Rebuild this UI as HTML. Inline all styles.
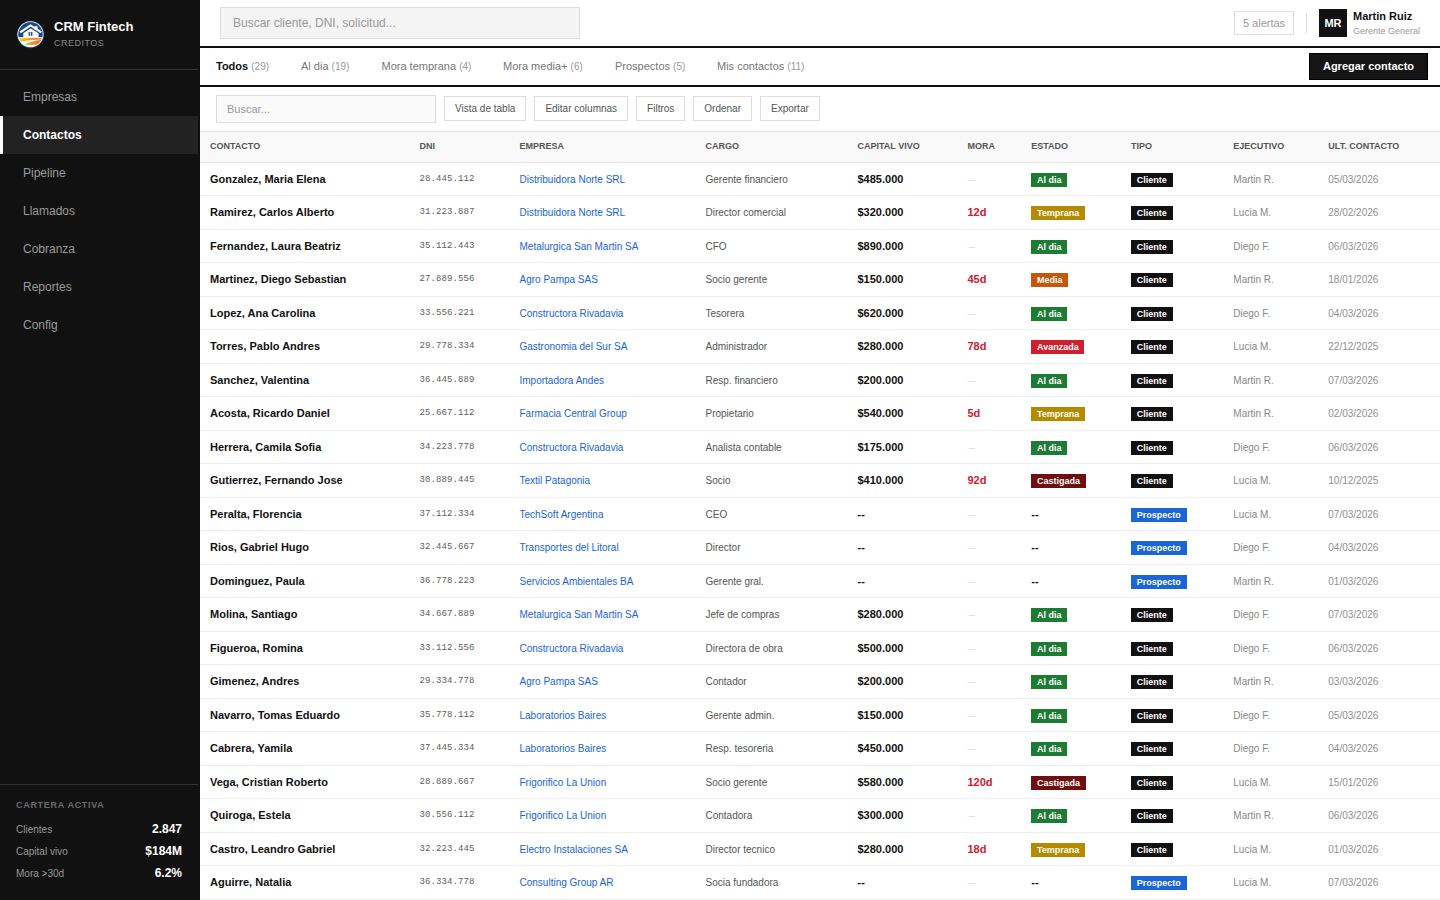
<!DOCTYPE html>
<html lang="es">
<head>
<meta charset="utf-8">
<title>CRM Fintech - Contactos</title>
<style>
*{box-sizing:border-box;margin:0;padding:0}
html,body{width:1440px;height:900px;overflow:hidden;background:#fff}
body{font-family:"Liberation Sans",sans-serif;color:#111;position:relative}
.side{position:absolute;left:0;top:0;width:200px;height:900px;background:#111}
.brand{position:absolute;left:0;top:0;width:198px;height:70px;border-bottom:1px solid #333}
.logo{position:absolute;left:16px;top:20px;width:29px;height:29px}
.bt1{position:absolute;left:54px;top:19px;font-size:13px;font-weight:bold;color:#fff;white-space:nowrap}
.bt2{position:absolute;left:54px;top:38px;font-size:9px;letter-spacing:.5px;color:#888;white-space:nowrap}
.nav{position:absolute;left:0;top:78px;width:198px}
.nav a{display:block;height:38px;line-height:38px;padding-left:23px;font-size:12px;color:#999;text-decoration:none;white-space:nowrap}
.nav a.on{background:#222;color:#fff;font-weight:bold;border-left:3px solid #fff;padding-left:20px}
.port{position:absolute;left:0;top:784px;width:198px;height:116px;border-top:1px solid #333}
.pt{position:absolute;left:16px;top:15px;font-size:9px;font-weight:bold;letter-spacing:.7px;color:#6a6a6a;white-space:nowrap}
.pr{position:absolute;left:16px;right:16px;height:22px;font-size:10px;color:#999}
.pr span{position:absolute;left:0;top:0}
.pr b{position:absolute;right:0;top:-2px;font-size:12px;color:#fff}

.main{position:absolute;left:200px;top:0;width:1240px;height:900px}
.hdr{position:absolute;left:0;top:0;width:1240px;height:48px;border-bottom:2px solid #111}
.gsearch{position:absolute;left:20px;top:7px;width:360px;height:32px;background:#f4f4f4;border:1px solid #ddd;font-size:12px;color:#999;padding-left:12px;line-height:30px}
.alerts{position:absolute;left:1034px;top:11px;width:60px;height:24px;border:1px solid #ddd;font-size:11px;color:#999;line-height:22px;text-align:center}
.vdiv{position:absolute;left:1106px;top:13px;width:1px;height:20px;background:#ddd}
.avatar{position:absolute;left:1119px;top:9px;width:28px;height:28px;background:#111;color:#fff;font-size:11px;font-weight:bold;text-align:center;line-height:28px}
.uname{position:absolute;left:1153px;top:10px;font-size:11px;font-weight:bold;color:#111;white-space:nowrap}
.urole{position:absolute;left:1153px;top:26px;font-size:9px;color:#999;white-space:nowrap}

.tabs{position:absolute;left:0;top:48px;width:1240px;height:39px;border-bottom:2px solid #111}
.tab{position:absolute;top:0;height:37px;line-height:36px;font-size:11px;color:#777;white-space:nowrap}
.tab small{font-size:10px;color:#999}
.tab.on{color:#111;font-weight:bold}
.tab.on small{font-weight:normal}
.addbtn{position:absolute;left:1109px;top:5px;width:119px;height:27px;background:#151515;border:1px solid #000;color:#fff;font-size:11px;font-weight:bold;line-height:25px;text-align:center}

.tool{position:absolute;left:0;top:87px;width:1240px;height:45px;border-bottom:1px solid #e5e5e5}
.lsearch{position:absolute;left:16px;top:8px;width:220px;height:28px;border:1px solid #ddd;background:#fafafa;font-size:11px;color:#999;padding-left:10px;line-height:26px}
.btn{position:absolute;top:9px;height:25px;border:1px solid #ddd;background:#fff;font-size:10px;color:#555;line-height:23px;padding:0 10px;white-space:nowrap}

.thead{position:absolute;left:0;top:132px;width:1240px;height:31px;background:#f9f9f9;border-bottom:1px solid #e5e5e5;display:flex}
.th{height:30px;line-height:28px;padding-left:10px;font-size:9px;font-weight:bold;color:#555;white-space:nowrap}
.tbody{position:absolute;left:0;top:162.75px;width:1240px}
.tr{display:flex;height:33.5px;border-bottom:1px solid #eee}
.td{padding-left:10px;white-space:nowrap;overflow:hidden;display:flex;align-items:center;height:32.5px}
.tr:nth-child(even) .td>*{position:relative;top:-0.5px}
.tr:nth-child(even) .td>.badge{top:0.5px}
.c1{width:209.5px}.c2{width:100px}.c3{width:186px}.c4{width:152px}.c5{width:110px}.c6{width:63.75px}.c7{width:99.75px}.c8{width:102.3px}.c9{width:95px}.c10{width:121.7px}
.nm{font-size:11px;font-weight:bold;color:#111}
.dni{font-family:"Liberation Mono",monospace;font-size:9px;letter-spacing:.1px;color:#606060}
.emp{font-size:10px;color:#1864dc}
.car{font-size:10px;color:#555}
.cap{font-size:11px;font-weight:bold;color:#111}
.mora{font-size:11px;font-weight:bold;color:#d0202e}
.nomora{font-size:7.5px;color:#ccc}
.badge{display:block;font-size:9px;font-weight:bold;color:#fff;padding:2px 5.75px;line-height:10px;position:relative;top:1px}
.b-ok{background:#1e7b34}
.b-tem{background:#b38a00}
.b-med{background:#c8560a}
.b-ava{background:#d0202e}
.b-cas{background:#6e0e0e}
.b-cli{background:#111}
.b-pro{background:#1a66d9}
.eje{font-size:10px;color:#888}
.fec{font-size:10px;color:#909090}
</style>
</head>
<body>
<div class="side">
  <div class="brand">
    <svg class="logo" width="29" height="29" viewBox="0 0 29 29">
      <defs>
        <linearGradient id="og" x1="0" y1="0" x2="1" y2="0"><stop offset="0" stop-color="#fbc400"/><stop offset="1" stop-color="#ef6530"/></linearGradient>
        <clipPath id="lc"><circle cx="14.5" cy="14.3" r="12.2"/></clipPath>
      </defs>
      <circle cx="14.5" cy="14.6" r="13.6" fill="#1b4a88"/>
      <circle cx="14.5" cy="14.2" r="13" fill="#f4f6f8"/>
      <g clip-path="url(#lc)">
        <rect x="0" y="0" width="29" height="17.4" fill="#1b4a88"/>
        <rect x="0" y="17.4" width="29" height="12" fill="#fff"/>
        <path d="M3 18.6 Q14 17.6 26 18.2 Q25.8 19.2 25.5 19.4 Q15 19.6 5 21.4 Q3.8 20 3 18.6Z" fill="url(#og)"/>
        <path d="M8.2 24.4 Q16 20.6 25.6 19.9 Q24.6 22.8 22 24.6 Q15 25.6 8.2 24.4Z" fill="url(#og)"/>
        <path d="M4.2 12.4 L14.5 5.4 L25.2 12.4" stroke="#fff" stroke-width="2.1" fill="none"/>
        <rect x="18.5" y="6.2" width="3" height="3.6" fill="#fff"/>
        <path d="M7.3 13.2 L14.5 8.6 L22.6 13.2 L22.6 17.6 L7.3 17.6Z" fill="#fff"/>
        <rect x="12.6" y="11.9" width="1.3" height="3.9" fill="#1b4a88"/>
        <rect x="14.8" y="11.9" width="1.6" height="3.9" fill="#1b4a88"/>
      </g>
    </svg>
    <div class="bt1">CRM Fintech</div>
    <div class="bt2">CREDITOS</div>
  </div>
  <div class="nav">
    <a>Empresas</a>
    <a class="on">Contactos</a>
    <a>Pipeline</a>
    <a>Llamados</a>
    <a>Cobranza</a>
    <a>Reportes</a>
    <a>Config</a>
  </div>
  <div class="port">
    <div class="pt">CARTERA ACTIVA</div>
    <div class="pr" style="top:39px"><span>Clientes</span><b>2.847</b></div>
    <div class="pr" style="top:61px"><span>Capital vivo</span><b>$184M</b></div>
    <div class="pr" style="top:83px"><span>Mora &gt;30d</span><b>6.2%</b></div>
  </div>
</div>
<div class="main">
  <div class="hdr">
    <div class="gsearch">Buscar cliente, DNI, solicitud...</div>
    <div class="alerts">5 alertas</div>
    <div class="vdiv"></div>
    <div class="avatar">MR</div>
    <div class="uname">Martin Ruiz</div>
    <div class="urole">Gerente General</div>
  </div>
  <div class="tabs">
    <div class="tab on" style="left:16px">Todos <small>(29)</small></div>
    <div class="tab" style="left:101px">Al dia <small>(19)</small></div>
    <div class="tab" style="left:181.5px">Mora temprana <small>(4)</small></div>
    <div class="tab" style="left:303px">Mora media+ <small>(6)</small></div>
    <div class="tab" style="left:415px">Prospectos <small>(5)</small></div>
    <div class="tab" style="left:517px">Mis contactos <small>(11)</small></div>
    <div class="addbtn">Agregar contacto</div>
  </div>
  <div class="tool">
    <div class="lsearch">Buscar...</div>
    <div class="btn" style="left:244px">Vista de tabla</div>
    <div class="btn" style="left:334.4px">Editar columnas</div>
    <div class="btn" style="left:436.1px">Filtros</div>
    <div class="btn" style="left:493.3px">Ordenar</div>
    <div class="btn" style="left:560px">Exportar</div>
  </div>
  <div class="thead">
    <div class="th c1">CONTACTO</div><div class="th c2">DNI</div><div class="th c3">EMPRESA</div><div class="th c4">CARGO</div><div class="th c5">CAPITAL VIVO</div><div class="th c6">MORA</div><div class="th c7">ESTADO</div><div class="th c8">TIPO</div><div class="th c9">EJECUTIVO</div><div class="th c10">ULT. CONTACTO</div>
  </div>
  <div class="tbody">
<div class="tr"><div class="td c1"><span class="nm">Gonzalez, Maria Elena</span></div><div class="td c2"><span class="dni">28.445.112</span></div><div class="td c3"><span class="emp">Distribuidora Norte SRL</span></div><div class="td c4"><span class="car">Gerente financiero</span></div><div class="td c5"><span class="cap">$485.000</span></div><div class="td c6"><span class="nomora">—</span></div><div class="td c7"><span class="badge b-ok">Al dia</span></div><div class="td c8"><span class="badge b-cli">Cliente</span></div><div class="td c9"><span class="eje">Martin R.</span></div><div class="td c10"><span class="fec">05/03/2026</span></div></div>
<div class="tr"><div class="td c1"><span class="nm">Ramirez, Carlos Alberto</span></div><div class="td c2"><span class="dni">31.223.887</span></div><div class="td c3"><span class="emp">Distribuidora Norte SRL</span></div><div class="td c4"><span class="car">Director comercial</span></div><div class="td c5"><span class="cap">$320.000</span></div><div class="td c6"><span class="mora">12d</span></div><div class="td c7"><span class="badge b-tem">Temprana</span></div><div class="td c8"><span class="badge b-cli">Cliente</span></div><div class="td c9"><span class="eje">Lucia M.</span></div><div class="td c10"><span class="fec">28/02/2026</span></div></div>
<div class="tr"><div class="td c1"><span class="nm">Fernandez, Laura Beatriz</span></div><div class="td c2"><span class="dni">35.112.443</span></div><div class="td c3"><span class="emp">Metalurgica San Martin SA</span></div><div class="td c4"><span class="car">CFO</span></div><div class="td c5"><span class="cap">$890.000</span></div><div class="td c6"><span class="nomora">—</span></div><div class="td c7"><span class="badge b-ok">Al dia</span></div><div class="td c8"><span class="badge b-cli">Cliente</span></div><div class="td c9"><span class="eje">Diego F.</span></div><div class="td c10"><span class="fec">06/03/2026</span></div></div>
<div class="tr"><div class="td c1"><span class="nm">Martinez, Diego Sebastian</span></div><div class="td c2"><span class="dni">27.889.556</span></div><div class="td c3"><span class="emp">Agro Pampa SAS</span></div><div class="td c4"><span class="car">Socio gerente</span></div><div class="td c5"><span class="cap">$150.000</span></div><div class="td c6"><span class="mora">45d</span></div><div class="td c7"><span class="badge b-med">Media</span></div><div class="td c8"><span class="badge b-cli">Cliente</span></div><div class="td c9"><span class="eje">Martin R.</span></div><div class="td c10"><span class="fec">18/01/2026</span></div></div>
<div class="tr"><div class="td c1"><span class="nm">Lopez, Ana Carolina</span></div><div class="td c2"><span class="dni">33.556.221</span></div><div class="td c3"><span class="emp">Constructora Rivadavia</span></div><div class="td c4"><span class="car">Tesorera</span></div><div class="td c5"><span class="cap">$620.000</span></div><div class="td c6"><span class="nomora">—</span></div><div class="td c7"><span class="badge b-ok">Al dia</span></div><div class="td c8"><span class="badge b-cli">Cliente</span></div><div class="td c9"><span class="eje">Diego F.</span></div><div class="td c10"><span class="fec">04/03/2026</span></div></div>
<div class="tr"><div class="td c1"><span class="nm">Torres, Pablo Andres</span></div><div class="td c2"><span class="dni">29.778.334</span></div><div class="td c3"><span class="emp">Gastronomia del Sur SA</span></div><div class="td c4"><span class="car">Administrador</span></div><div class="td c5"><span class="cap">$280.000</span></div><div class="td c6"><span class="mora">78d</span></div><div class="td c7"><span class="badge b-ava">Avanzada</span></div><div class="td c8"><span class="badge b-cli">Cliente</span></div><div class="td c9"><span class="eje">Lucia M.</span></div><div class="td c10"><span class="fec">22/12/2025</span></div></div>
<div class="tr"><div class="td c1"><span class="nm">Sanchez, Valentina</span></div><div class="td c2"><span class="dni">36.445.889</span></div><div class="td c3"><span class="emp">Importadora Andes</span></div><div class="td c4"><span class="car">Resp. financiero</span></div><div class="td c5"><span class="cap">$200.000</span></div><div class="td c6"><span class="nomora">—</span></div><div class="td c7"><span class="badge b-ok">Al dia</span></div><div class="td c8"><span class="badge b-cli">Cliente</span></div><div class="td c9"><span class="eje">Martin R.</span></div><div class="td c10"><span class="fec">07/03/2026</span></div></div>
<div class="tr"><div class="td c1"><span class="nm">Acosta, Ricardo Daniel</span></div><div class="td c2"><span class="dni">25.667.112</span></div><div class="td c3"><span class="emp">Farmacia Central Group</span></div><div class="td c4"><span class="car">Propietario</span></div><div class="td c5"><span class="cap">$540.000</span></div><div class="td c6"><span class="mora">5d</span></div><div class="td c7"><span class="badge b-tem">Temprana</span></div><div class="td c8"><span class="badge b-cli">Cliente</span></div><div class="td c9"><span class="eje">Martin R.</span></div><div class="td c10"><span class="fec">02/03/2026</span></div></div>
<div class="tr"><div class="td c1"><span class="nm">Herrera, Camila Sofia</span></div><div class="td c2"><span class="dni">34.223.778</span></div><div class="td c3"><span class="emp">Constructora Rivadavia</span></div><div class="td c4"><span class="car">Analista contable</span></div><div class="td c5"><span class="cap">$175.000</span></div><div class="td c6"><span class="nomora">—</span></div><div class="td c7"><span class="badge b-ok">Al dia</span></div><div class="td c8"><span class="badge b-cli">Cliente</span></div><div class="td c9"><span class="eje">Diego F.</span></div><div class="td c10"><span class="fec">06/03/2026</span></div></div>
<div class="tr"><div class="td c1"><span class="nm">Gutierrez, Fernando Jose</span></div><div class="td c2"><span class="dni">30.889.445</span></div><div class="td c3"><span class="emp">Textil Patagonia</span></div><div class="td c4"><span class="car">Socio</span></div><div class="td c5"><span class="cap">$410.000</span></div><div class="td c6"><span class="mora">92d</span></div><div class="td c7"><span class="badge b-cas">Castigada</span></div><div class="td c8"><span class="badge b-cli">Cliente</span></div><div class="td c9"><span class="eje">Lucia M.</span></div><div class="td c10"><span class="fec">10/12/2025</span></div></div>
<div class="tr"><div class="td c1"><span class="nm">Peralta, Florencia</span></div><div class="td c2"><span class="dni">37.112.334</span></div><div class="td c3"><span class="emp">TechSoft Argentina</span></div><div class="td c4"><span class="car">CEO</span></div><div class="td c5"><span class="cap">--</span></div><div class="td c6"><span class="nomora">—</span></div><div class="td c7"><span class="cap">--</span></div><div class="td c8"><span class="badge b-pro">Prospecto</span></div><div class="td c9"><span class="eje">Lucia M.</span></div><div class="td c10"><span class="fec">07/03/2026</span></div></div>
<div class="tr"><div class="td c1"><span class="nm">Rios, Gabriel Hugo</span></div><div class="td c2"><span class="dni">32.445.667</span></div><div class="td c3"><span class="emp">Transportes del Litoral</span></div><div class="td c4"><span class="car">Director</span></div><div class="td c5"><span class="cap">--</span></div><div class="td c6"><span class="nomora">—</span></div><div class="td c7"><span class="cap">--</span></div><div class="td c8"><span class="badge b-pro">Prospecto</span></div><div class="td c9"><span class="eje">Diego F.</span></div><div class="td c10"><span class="fec">04/03/2026</span></div></div>
<div class="tr"><div class="td c1"><span class="nm">Dominguez, Paula</span></div><div class="td c2"><span class="dni">36.778.223</span></div><div class="td c3"><span class="emp">Servicios Ambientales BA</span></div><div class="td c4"><span class="car">Gerente gral.</span></div><div class="td c5"><span class="cap">--</span></div><div class="td c6"><span class="nomora">—</span></div><div class="td c7"><span class="cap">--</span></div><div class="td c8"><span class="badge b-pro">Prospecto</span></div><div class="td c9"><span class="eje">Martin R.</span></div><div class="td c10"><span class="fec">01/03/2026</span></div></div>
<div class="tr"><div class="td c1"><span class="nm">Molina, Santiago</span></div><div class="td c2"><span class="dni">34.667.889</span></div><div class="td c3"><span class="emp">Metalurgica San Martin SA</span></div><div class="td c4"><span class="car">Jefe de compras</span></div><div class="td c5"><span class="cap">$280.000</span></div><div class="td c6"><span class="nomora">—</span></div><div class="td c7"><span class="badge b-ok">Al dia</span></div><div class="td c8"><span class="badge b-cli">Cliente</span></div><div class="td c9"><span class="eje">Diego F.</span></div><div class="td c10"><span class="fec">07/03/2026</span></div></div>
<div class="tr"><div class="td c1"><span class="nm">Figueroa, Romina</span></div><div class="td c2"><span class="dni">33.112.556</span></div><div class="td c3"><span class="emp">Constructora Rivadavia</span></div><div class="td c4"><span class="car">Directora de obra</span></div><div class="td c5"><span class="cap">$500.000</span></div><div class="td c6"><span class="nomora">—</span></div><div class="td c7"><span class="badge b-ok">Al dia</span></div><div class="td c8"><span class="badge b-cli">Cliente</span></div><div class="td c9"><span class="eje">Diego F.</span></div><div class="td c10"><span class="fec">06/03/2026</span></div></div>
<div class="tr"><div class="td c1"><span class="nm">Gimenez, Andres</span></div><div class="td c2"><span class="dni">29.334.778</span></div><div class="td c3"><span class="emp">Agro Pampa SAS</span></div><div class="td c4"><span class="car">Contador</span></div><div class="td c5"><span class="cap">$200.000</span></div><div class="td c6"><span class="nomora">—</span></div><div class="td c7"><span class="badge b-ok">Al dia</span></div><div class="td c8"><span class="badge b-cli">Cliente</span></div><div class="td c9"><span class="eje">Martin R.</span></div><div class="td c10"><span class="fec">03/03/2026</span></div></div>
<div class="tr"><div class="td c1"><span class="nm">Navarro, Tomas Eduardo</span></div><div class="td c2"><span class="dni">35.778.112</span></div><div class="td c3"><span class="emp">Laboratorios Baires</span></div><div class="td c4"><span class="car">Gerente admin.</span></div><div class="td c5"><span class="cap">$150.000</span></div><div class="td c6"><span class="nomora">—</span></div><div class="td c7"><span class="badge b-ok">Al dia</span></div><div class="td c8"><span class="badge b-cli">Cliente</span></div><div class="td c9"><span class="eje">Diego F.</span></div><div class="td c10"><span class="fec">05/03/2026</span></div></div>
<div class="tr"><div class="td c1"><span class="nm">Cabrera, Yamila</span></div><div class="td c2"><span class="dni">37.445.334</span></div><div class="td c3"><span class="emp">Laboratorios Baires</span></div><div class="td c4"><span class="car">Resp. tesoreria</span></div><div class="td c5"><span class="cap">$450.000</span></div><div class="td c6"><span class="nomora">—</span></div><div class="td c7"><span class="badge b-ok">Al dia</span></div><div class="td c8"><span class="badge b-cli">Cliente</span></div><div class="td c9"><span class="eje">Diego F.</span></div><div class="td c10"><span class="fec">04/03/2026</span></div></div>
<div class="tr"><div class="td c1"><span class="nm">Vega, Cristian Roberto</span></div><div class="td c2"><span class="dni">28.889.667</span></div><div class="td c3"><span class="emp">Frigorifico La Union</span></div><div class="td c4"><span class="car">Socio gerente</span></div><div class="td c5"><span class="cap">$580.000</span></div><div class="td c6"><span class="mora">120d</span></div><div class="td c7"><span class="badge b-cas">Castigada</span></div><div class="td c8"><span class="badge b-cli">Cliente</span></div><div class="td c9"><span class="eje">Lucia M.</span></div><div class="td c10"><span class="fec">15/01/2026</span></div></div>
<div class="tr"><div class="td c1"><span class="nm">Quiroga, Estela</span></div><div class="td c2"><span class="dni">30.556.112</span></div><div class="td c3"><span class="emp">Frigorifico La Union</span></div><div class="td c4"><span class="car">Contadora</span></div><div class="td c5"><span class="cap">$300.000</span></div><div class="td c6"><span class="nomora">—</span></div><div class="td c7"><span class="badge b-ok">Al dia</span></div><div class="td c8"><span class="badge b-cli">Cliente</span></div><div class="td c9"><span class="eje">Martin R.</span></div><div class="td c10"><span class="fec">06/03/2026</span></div></div>
<div class="tr"><div class="td c1"><span class="nm">Castro, Leandro Gabriel</span></div><div class="td c2"><span class="dni">32.223.445</span></div><div class="td c3"><span class="emp">Electro Instalaciones SA</span></div><div class="td c4"><span class="car">Director tecnico</span></div><div class="td c5"><span class="cap">$280.000</span></div><div class="td c6"><span class="mora">18d</span></div><div class="td c7"><span class="badge b-tem">Temprana</span></div><div class="td c8"><span class="badge b-cli">Cliente</span></div><div class="td c9"><span class="eje">Lucia M.</span></div><div class="td c10"><span class="fec">01/03/2026</span></div></div>
<div class="tr"><div class="td c1"><span class="nm">Aguirre, Natalia</span></div><div class="td c2"><span class="dni">36.334.778</span></div><div class="td c3"><span class="emp">Consulting Group AR</span></div><div class="td c4"><span class="car">Socia fundadora</span></div><div class="td c5"><span class="cap">--</span></div><div class="td c6"><span class="nomora">—</span></div><div class="td c7"><span class="cap">--</span></div><div class="td c8"><span class="badge b-pro">Prospecto</span></div><div class="td c9"><span class="eje">Lucia M.</span></div><div class="td c10"><span class="fec">07/03/2026</span></div></div>
  </div>
</div>
</body>
</html>
